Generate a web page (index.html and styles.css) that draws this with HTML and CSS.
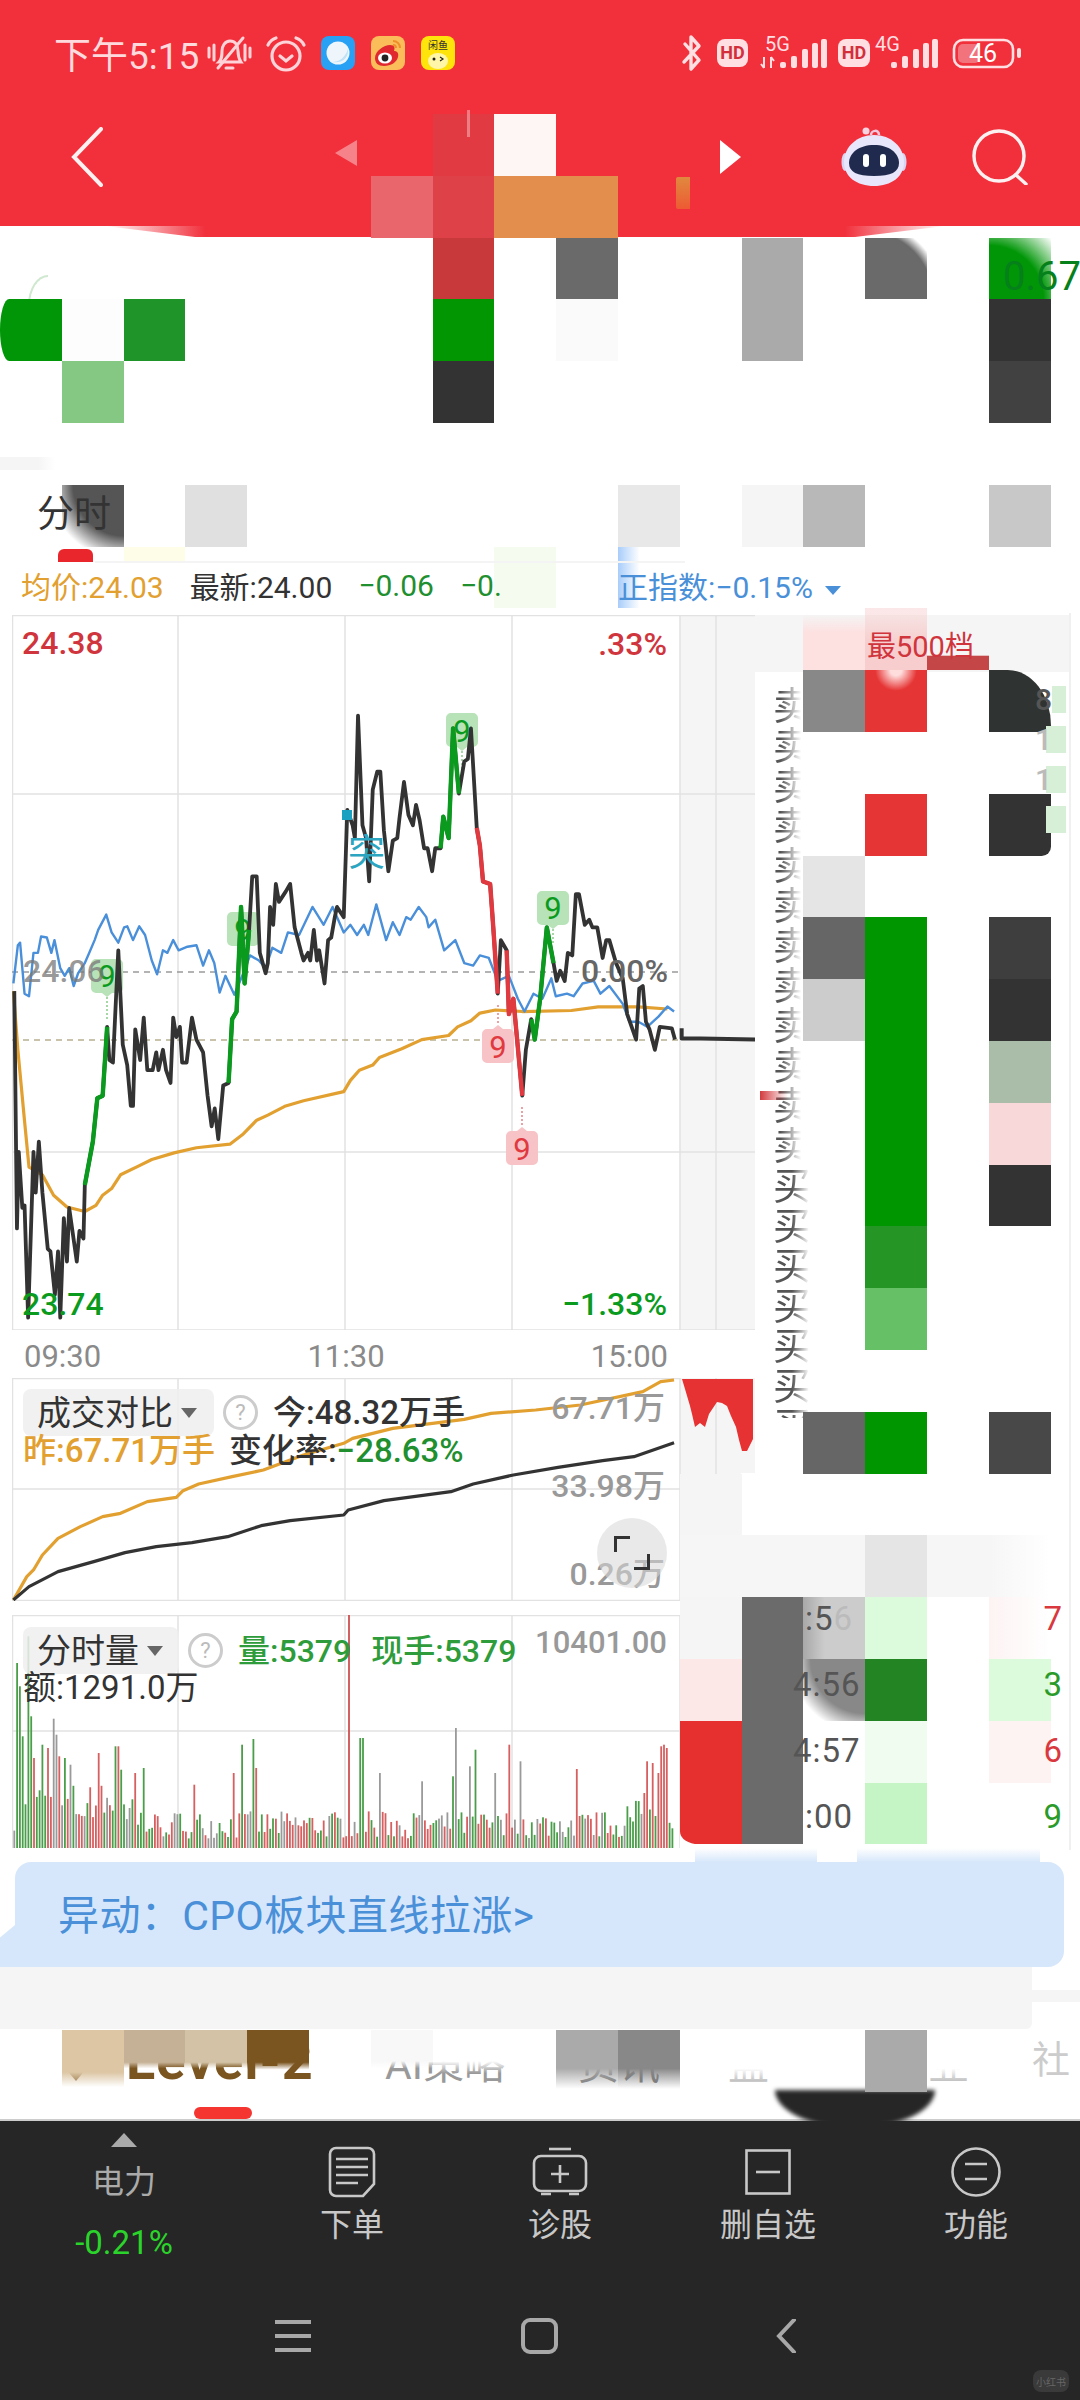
FILE: index.html
```html
<!DOCTYPE html>
<html lang="zh-CN">
<head>
  <meta charset="UTF-8" />
  <meta name="viewport" content="width=device-width, initial-scale=1.0"/>
  <title>分时</title>
  <link rel="stylesheet" href="styles.css">
</head>
<body>
<div class="page">

  <header class="top">
    <div class="status">
      <span class="clock">下午5:15</span>
      <svg class="st-bell" viewBox="0 0 45 36">
        <path d="M2 13v9M7 10v15M38 10v15M43 13v9"/>
        <path d="M12 27c3-3 3-6 3-11 0-5 3-10 8-10s8 4 8 10c0 5 1 8 3 11z"/>
        <path d="M11 33L36 3"/>
        <path d="M19 33h7"/>
      </svg>
      <svg class="st-alarm" viewBox="0 0 42 38">
        <circle cx="21" cy="22" r="14"/>
        <path d="M15 22l6 5 6-5M3 11c2-4 5-6 8-7M39 11c-2-4-5-6-8-7"/>
      </svg>
      <svg class="st-app" viewBox="0 0 34 34">
        <rect width="34" height="34" rx="8" fill="#28a0f4"/>
        <circle cx="17" cy="17" r="11.5" fill="#eef6fb"/>
        <path d="M11 26c7 0 13-4 16-13 1 8-5 15-16 13z" fill="#bfe2f6"/>
      </svg>
      <svg class="st-app" viewBox="0 0 34 34">
        <rect width="34" height="34" rx="8" fill="#fbbd5a"/>
        <path d="M4 22c0-7 9-13 15-13 5 0 5 3 4 6 3 0 5 2 4 6-1 5-7 9-14 9-6 0-9-3-9-8z" fill="#e0282e"/>
        <ellipse cx="14" cy="22" rx="7" ry="5.5" fill="#fff"/>
        <circle cx="14" cy="22" r="3.4" fill="#222"/>
        <path d="M22 5c4 0 7 3 7 7M22 9c2 0 3 1 3 3" fill="none" stroke="#ef8f2a" stroke-width="2"/>
      </svg>
      <svg class="st-app" viewBox="0 0 34 34">
        <rect width="34" height="34" rx="8" fill="#ffe40c"/>
        <text x="17" y="13" class="st-xy">闲鱼</text>
        <ellipse cx="17" cy="25" rx="10" ry="8" fill="#fff6a8"/>
        <circle cx="13" cy="23" r="1.5" fill="#222"/>
        <path d="M19 21l3 2-3 2" fill="none" stroke="#222" stroke-width="1.2"/>
      </svg>
      <svg class="st-right" viewBox="0 0 350 50">
        <path class="st-line" d="M5 15l14 16-8 9V8l8 9L4 33"/>
        <rect x="37" y="10" width="31" height="28" rx="8" class="st-fill"/>
        <text x="52.5" y="30" class="st-hd">HD</text>
        <text x="85" y="22" class="st-net">5G</text>
        <path class="st-thin" d="M84 28v11M84 39l-3-4M91 39V28M91 28l3 4"/>
        <rect x="100" y="33" width="6" height="6" rx="2" class="st-fill"/>
        <rect x="111" y="27" width="6" height="12" rx="2" class="st-fill"/>
        <rect x="122" y="20" width="6" height="19" rx="2" class="st-fill"/>
        <rect x="132" y="14" width="6" height="25" rx="2" class="st-fill"/>
        <rect x="141" y="10" width="6" height="29" rx="2" class="st-fill"/>
        <rect x="158" y="10" width="32" height="28" rx="8" class="st-fill"/>
        <text x="174" y="30" class="st-hd">HD</text>
        <text x="195" y="22" class="st-net">4G</text>
        <rect x="211" y="33" width="6" height="6" rx="2" class="st-fill"/>
        <rect x="222" y="27" width="6" height="12" rx="2" class="st-fill"/>
        <rect x="233" y="20" width="6" height="19" rx="2" class="st-fill"/>
        <rect x="243" y="14" width="6" height="25" rx="2" class="st-fill"/>
        <rect x="252" y="10" width="6" height="29" rx="2" class="st-fill"/>
        <rect x="274" y="11" width="59" height="27" rx="9" class="st-batt"/>
        <rect x="278" y="15" width="22" height="19" rx="5" fill="#f2737b"/>
        <text x="303" y="33" class="st-pct">46</text>
        <rect x="337" y="19" width="4" height="10" rx="2" class="st-fill"/>
      </svg>
    </div>
    <nav class="nav">
      <svg class="nav-back" viewBox="0 0 32 60"><path d="M30 2L3 30l27 28"/></svg>
      <span class="nav-prev"></span>
      <span class="nav-tick"></span>
      <span class="nav-tag"></span>
      <span class="nav-next"></span>
      <svg class="nav-robot" viewBox="0 0 66 60">
        <path d="M30 8c0-5 8-6 8 0" fill="none" stroke="#f2c6dc" stroke-width="2.5"/>
        <circle cx="25" cy="4" r="3.5" fill="#f7d3e2"/>
        <ellipse cx="4" cy="35" rx="3.5" ry="9" fill="#d6d6f4"/>
        <ellipse cx="62" cy="35" rx="3.5" ry="9" fill="#d6d6f4"/>
        <path d="M33 8c17 0 30 12 30 27 0 15-13 24-30 24S3 50 3 35C3 20 16 8 33 8z" fill="#e8e6fa"/>
        <path d="M33 18c15 0 25 8 25 18 0 9-8 13-25 13S8 45 8 36c0-10 10-18 25-18z" fill="#1f2a4e"/>
        <rect x="22" y="27" width="6" height="13" rx="3" fill="#fff"/>
        <rect x="39" y="27" width="6" height="13" rx="3" fill="#fff"/>
      </svg>
      <svg class="nav-search" viewBox="0 0 56 56"><circle cx="27" cy="27" r="25"/><path d="M44 46l10 9"/></svg>
    </nav>
    <span class="top-bulge"></span>
  </header>

  <section class="quote">
    <span class="quote-num">0.67</span>
    <span class="quote-arc"></span>
    <span class="quote-strip"></span>
  </section>

  <div class="tabrow">
    <span class="tabrow-cur">分时</span>
    <span class="tabrow-mark"></span>
  </div>

  <div class="info">
    <span class="c-avg">均价:24.03</span>
    <span class="c-now">最新:24.00</span>
    <span class="c-down">−0.06</span>
    <span class="c-down">−0.</span>
    <span class="c-index">正指数:−0.15%</span>
    <span class="c-caret"></span>
  </div>

  <main class="main">
    <div class="charts">
      <div class="chart chart-price">
        <svg class="plot" width="743" height="715" viewBox="0 0 743 715">
          <rect x="668" width="75" height="715" fill="#f5f5f5"/>
          <path class="grid" d="M.5 0v715M166 0v715M333 0v715M500 0v715M668 0v715M704 0v715M0 179h743M0 537h743M0 .5h743M0 715h743"/>
          <path class="dash" d="M0 357h668"/>
          <path class="dash dash-avg" d="M0 425h668"/>
          <g class="tags" transform="translate(-12,0)">
            <path class="tag-up" d="M91 964a5 5 0 0 1 5-5h22a5 5 0 0 1 5 5v24a5 5 0 0 1-5 5h-6l-5 4-5-4h-6a5 5 0 0 1-5-5z" transform="translate(0,-615)"/>
            <path class="tag-up" d="M227 917a5 5 0 0 1 5-5h22a5 5 0 0 1 5 5v24a5 5 0 0 1-5 5h-22a5 5 0 0 1-5-5z" transform="translate(0,-615)"/>
            <path class="tag-up" d="M446 718a5 5 0 0 1 5-5h22a5 5 0 0 1 5 5v24a5 5 0 0 1-5 5h-6l-5 4-5-4h-6a5 5 0 0 1-5-5z" transform="translate(0,-615)"/>
            <path class="tag-up" d="M537 896a5 5 0 0 1 5-5h22a5 5 0 0 1 5 5v24a5 5 0 0 1-5 5h-6l-5 4-5-4h-6a5 5 0 0 1-5-5z" transform="translate(0,-615)"/>
            <path class="tag-dn" d="M482 1034a5 5 0 0 1 5-5h6l5-4 5 4h6a5 5 0 0 1 5 5v24a5 5 0 0 1-5 5h-22a5 5 0 0 1-5-5z" transform="translate(0,-615)"/>
            <path class="tag-dn" d="M506 1136a5 5 0 0 1 5-5h6l5-4 5 4h6a5 5 0 0 1 5 5v24a5 5 0 0 1-5 5h-22a5 5 0 0 1-5-5z" transform="translate(0,-615)"/>
            <text x="107" y="372" class="nine up">9</text>
            <text x="243" y="326" class="nine up">9</text>
            <text x="462" y="127" class="nine up">9</text>
            <text x="553" y="304" class="nine up">9</text>
            <text x="498" y="443" class="nine dn">9</text>
            <text x="522" y="545" class="nine dn">9</text>
            <path class="drop drop-up" d="M107 382v24M462 136v25M553 314v16"/>
            <path class="drop drop-dn" d="M498 390v20M522 492v20"/>
          </g>
          <g transform="translate(-12,-55) scale(.4464,.5102)">
            <polyline class="ln ln-avg" points="30,845 40,960 55,1100 65,1190 95,1205 120,1245 150,1268 190,1277 215,1265 230,1245 250,1232 270,1205 310,1188 340,1175 390,1162 440,1152 515,1145 545,1125 575,1098 600,1088 640,1070 680,1060 770,1042 785,1020 805,1000 835,990 850,975 900,958 945,940 1005,932 1025,915 1055,903 1075,888 1110,882 1170,885 1280,883 1340,876 1430,876 1495,880"/>
            <polyline class="ln ln-idx" points="30,830 40,755 45,750 55,850 65,855 75,770 85,770 92,738 105,740 115,770 122,745 135,800 145,815 155,800 165,835 175,810 190,790 200,770 212,745 220,725 238,695 250,730 265,750 278,720 285,718 298,745 312,718 325,735 340,785 352,812 365,765 375,770 388,745 400,765 420,758 440,755 455,795 468,765 480,790 492,848 505,815 525,852 545,810 560,775 580,785 595,800 610,760 630,770 645,730 670,735 700,680 725,715 745,680 770,730 785,715 800,735 815,715 825,735 843,675 865,745 880,710 895,735 910,700 920,705 938,680 955,700 960,720 975,705 995,765 1020,745 1040,790 1060,795 1075,775 1095,780 1115,825 1140,815 1160,860 1175,885 1195,850 1215,860 1235,820 1245,855 1270,850 1285,855 1305,830 1330,825 1345,850 1365,835 1395,870 1410,905 1430,905 1450,915 1475,895 1495,875 1510,885"/>
            <polyline class="ln ln-price" points="32,845 38,1310 42,1160 50,1270 55,1265 63,1485 75,1160 80,1240 87,1140 95,1240 107,1350 113,1355 123,1440 130,1355 135,1485 143,1290 150,1375 155,1270 172,1375 178,1315 187,1330 190,1225 208,1140 218,1055 230,1050 240,915 245,980 253,985 265,765 275,950 285,990 293,1070 298,1070 303,920 314,980 322,897 330,1000 342,1000 350,965 355,1000 365,960 372,1000 382,1025 388,897 395,935 403,915 408,985 418,985 430,897 440,940 455,965 465,1050 474,1110 481,1075 489,1135 500,1030 512,1025 520,900 530,885 540,680 548,830 558,725 565,620 575,620 582,770 595,810 600,790 605,680 612,715 618,635 625,670 640,650 650,635 660,720 675,770 680,785 690,770 695,785 703,725 710,785 715,765 727,830 735,745 742,740 750,700 755,680 770,700 778,490 790,520 795,545 802,305 812,520 820,545 827,630 835,450 845,415 852,415 860,530 870,610 880,550 890,545 895,505 905,435 915,500 925,520 932,480 940,510 950,565 958,565 968,610 975,565 987,565 993,503 1005,545 1015,330 1028,458 1040,395 1048,390 1055,330 1068,525 1075,560 1082,630 1098,635 1105,720 1115,850 1122,745 1135,765 1140,890 1150,860 1170,1050 1178,960 1190,900 1198,940 1210,860 1225,720 1240,790 1247,825 1255,805 1265,825 1272,770 1282,775 1290,655 1297,655 1310,715 1320,705 1327,720 1338,720 1350,780 1358,745 1365,745 1380,790 1395,820 1405,890 1425,940 1432,840 1440,835 1447,905 1455,920 1467,960 1478,915 1505,918 1512,940"/>
            <polyline class="ln ln-up" points="190,1225 208,1140 218,1055 230,1050 240,915"/>
            <polyline class="ln ln-up" points="512,1025 520,900 530,885 540,680 548,830 558,725"/>
            <polyline class="ln ln-up" points="987,565 993,503 1005,545 1015,330 1028,458"/>
            <polyline class="ln ln-up" points="1190,900 1198,940 1210,860 1225,720 1240,790"/>
            <polyline class="ln ln-dn" points="1068,525 1075,560 1082,630 1098,635 1105,720 1115,850"/>
            <polyline class="ln ln-dn" points="1135,765 1140,890 1150,860 1170,1050"/>
            <polyline class="ln ln-stub" points="1527,918 1527,938 1570,938 1720,940"/>
          </g>
          <rect x="330" y="195" width="10" height="10" fill="#1aa0c0"/>
        </svg>
        <span class="lb lb-hi">24.38</span>
        <span class="lb lb-hipct">.33%</span>
        <span class="lb lb-pre">24.06</span>
        <span class="lb lb-zero">0.00%</span>
        <span class="lb lb-lo">23.74</span>
        <span class="lb lb-lopct">−1.33%</span>
        <span class="lb lb-tu">突</span>
      </div>

      <div class="axis"><span>09:30</span><span>11:30</span><span>15:00</span></div>

      <div class="chart chart-vol">
        <svg class="plot" width="743" height="223" viewBox="0 0 743 223">
          <rect x="668" width="61" height="223" fill="#f5f5f5"/>
          <rect x="729" width="14" height="95" fill="#f5f5f5"/>
          <path class="grid" d="M.5 0v223M166 0v223M333 0v223M500 0v223M668 0v223M704 0v223M0 111h668M0 .5h668M0 222.5h668"/>
          <polygon fill="#e63232" points="670,1 741,1 741,61 735,73 730,73 727,62 724,49 719,38 715,28 710,25 705,24 701,30 697,36 693,49 688,45 683,49 680,36 678,28 673,11"/>
          <g transform="translate(-12,-18) scale(.4464,.3333)">
            <polyline class="ln ln-avg" points="30,720 60,650 75,630 95,585 130,535 180,500 230,470 270,460 330,425 395,412 410,392 445,372 520,350 590,330 680,285 770,250 790,235 880,205 1040,178 1100,160 1200,150 1300,135 1440,95 1480,65 1510,60"/>
            <polyline class="ln ln-today" points="30,720 65,680 130,635 210,605 280,578 350,560 430,548 510,530 585,497 650,482 770,465 780,450 860,422 1010,395 1060,372 1150,345 1250,322 1350,302 1420,290 1510,248"/>
          </g>
        </svg>
        <span class="lb lb-max">67.71万</span>
        <span class="lb lb-mid">33.98万</span>
        <span class="lb lb-min">0.26万</span>
        <div class="legend legend-a">
          <span class="pill">成交对比<i class="pill-caret"></i></span>
          <span class="help">?</span>
          <span class="c-now">今:48.32万手</span>
        </div>
        <div class="legend legend-b">
          <span class="c-avg">昨:67.71万手</span>
          <span class="c-now">变化率:<em class="c-down">−28.63%</em></span>
        </div>
        <span class="expand"><i class="expand-a"></i><i class="expand-b"></i></span>
      </div>

      <div class="chart chart-bars">
        <svg class="plot" id="bars" width="668" height="233" viewBox="0 0 668 233">
          <path class="grid" d="M.5 0v233M166 0v233M333 0v233M500 0v233M668 0v233M0 116h668M0 .5h668"/>
        </svg>
        <span class="lb lb-cap">10401.00</span>
        <div class="legend legend-c">
          <span class="pill pill-sm">分时量<i class="pill-caret"></i></span>
          <span class="help">?</span>
          <span class="c-vol">量:5379</span>
          <span class="c-vol">现手:5379</span>
        </div>
        <div class="legend legend-d"><span class="c-now">额:1291.0万</span></div>
      </div>
    </div>

    <aside class="panel">
      <div class="panel-head"><span class="panel-title">最500档</span></div>
      <div class="panel-body">
        <div class="glitch"><span class="glitch-sell">卖卖卖卖卖卖卖卖卖卖卖卖</span><span class="glitch-buy">买买买买买买买</span></div>
        <i class="mid-mark"></i>
        <div class="book">
          <div class="book-row"><b>8</b><i></i></div>
          <div class="book-row"><b class="dim">1</b><i></i></div>
          <div class="book-row"><b class="dim">1</b><i></i></div>
          <div class="book-row"><i></i></div>
        </div>
      </div>
      <div class="ticks">
        <div class="tick"><span class="tick-time">:5<u>6</u></span><span class="tick-red">7</span></div>
        <div class="tick"><span class="tick-time">4:56</span><span class="tick-green">3</span></div>
        <div class="tick"><span class="tick-time">4:57</span><span class="tick-red">6</span></div>
        <div class="tick"><span class="tick-time">:00</span><span class="tick-green">9</span></div>
      </div>
    </aside>
  </main>

  <section class="banner">
    <i class="banner-smear banner-smear-a"></i>
    <i class="banner-smear banner-smear-b"></i>
    <span>异动：CPO板块直线拉涨&gt;</span>
  </section>
  <div class="strip"></div>

  <div class="tabs">
    <i class="tabs-drop"></i>
    <span class="tab tab-level">Level-2</span>
    <span class="tab tab-ai">AI策略</span>
    <span class="tab tab-news">资讯</span>
    <span class="tab tab-pan">盘</span>
    <span class="tab tab-ye">业</span>
    <span class="tab tab-she">社</span>
    <i class="tabs-mark"></i>
    <i class="tabs-blob"></i>
  </div>

  <footer class="dock">
    <div class="dock-row">
      <div class="dock-item dock-sector">
        <i class="dock-up"></i>
        <span>电力</span>
        <span class="dock-pct">-0.21%</span>
      </div>
      <div class="dock-item">
        <svg class="ic" width="48" height="52" viewBox="0 0 48 52">
          <path d="M8 2h32a6 6 0 0 1 6 6v30L35 50H8a6 6 0 0 1-6-6V8a6 6 0 0 1 6-6z"/>
          <path d="M8 13h32M8 21h32M8 29h32M8 37h22"/>
        </svg>
        <span>下单</span>
      </div>
      <div class="dock-item">
        <svg class="ic" width="56" height="50" viewBox="0 0 56 50">
          <path d="M17 2h22"/>
          <rect x="2" y="9" width="52" height="35" rx="7"/>
          <path d="M28 18v18M19 27h18M9 47h10M37 47h10"/>
        </svg>
        <span>诊股</span>
      </div>
      <div class="dock-item">
        <svg class="ic" width="46" height="46" viewBox="0 0 46 46">
          <rect x="1.5" y="1.5" width="43" height="43"/>
          <path d="M11 23h24"/>
        </svg>
        <span>删自选</span>
      </div>
      <div class="dock-item">
        <svg class="ic" width="50" height="50" viewBox="0 0 50 50">
          <ellipse cx="25" cy="25" rx="23.5" ry="23.5"/>
          <path d="M14 17h22M14 32h22"/>
        </svg>
        <span>功能</span>
      </div>
    </div>
    <div class="sysbar">
      <svg class="sys" width="36" height="34" viewBox="0 0 36 34"><path d="M0 3h36M0 17h36M0 31h36"/></svg>
      <svg class="sys" width="37" height="36" viewBox="0 0 37 36"><rect x="2" y="2" width="33" height="32" rx="7"/></svg>
      <svg class="sys sys-back" width="20" height="34" viewBox="0 0 20 34"><path d="M18 1L3 17l15 16"/></svg>
    </div>
    <span class="mark">小红书</span>
  </footer>

  <div class="mosaic" id="mosaic"></div>
</div>
<script src="app.js"></script>
</body>
</html>
```

FILE: styles.css
```css
* {
  box-sizing: border-box;
}

html, body {
  margin: 0;
  padding: 0;
}

body {
  background: #fff;
  color: #333;
  font-family: Roboto, "Noto Sans CJK SC", sans-serif;
}

.page {
  position: relative;
  width: 1080px;
  height: 2400px;
  overflow: hidden;
  display: flex;
  flex-direction: column;
  background: #fff;
}

/* red header */
.top {
  position: relative;
  height: 226px;
  background: #f1303c;
  flex: none;
}

.status {
  height: 106px;
  padding-left: 54px;
  display: flex;
  align-items: center;
}

.clock {
  font-size: 37px;
  color: #ffdadd;
  width: 153px;
  white-space: nowrap;
}

.st-bell {
  width: 45px;
  height: 36px;
  fill: none;
  stroke: #ffd3d7;
  stroke-width: 3;
  stroke-linecap: round;
}

.st-alarm {
  width: 42px;
  height: 38px;
  margin-left: 13px;
  fill: none;
  stroke: #ffd3d7;
  stroke-width: 3.2;
  stroke-linecap: round;
}

.st-app {
  width: 34px;
  height: 34px;
  margin-left: 14px;
}

.st-app + .st-app {
  margin-left: 16px;
}

.st-xy {
  font-size: 10px;
  text-anchor: middle;
  fill: #333;
}

.st-right {
  width: 350px;
  height: 50px;
  margin-left: auto;
  margin-right: 50px;
  transform: translateY(1px);
}

.st-line {
  fill: none;
  stroke: #ffdfe2;
  stroke-width: 3.4;
  stroke-linejoin: round;
  stroke-linecap: round;
}

.st-thin {
  fill: none;
  stroke: #ffdfe2;
  stroke-width: 2;
}

.st-fill {
  fill: #ffdfe2;
}

.st-hd {
  font-size: 18px;
  font-weight: 700;
  text-anchor: middle;
  fill: #d22f3c;
}

.st-net {
  font-size: 20px;
  fill: #ffdfe2;
}

.st-batt {
  fill: none;
  stroke: #ffdfe2;
  stroke-width: 2.6;
}

.st-pct {
  font-size: 25px;
  text-anchor: middle;
  fill: #fff;
}

.nav {
  position: relative;
  height: 102px;
  display: flex;
  align-items: center;
}

.nav-back {
  width: 32px;
  height: 60px;
  margin-left: 71px;
  fill: none;
  stroke: #fdf0f0;
  stroke-width: 4;
  stroke-linecap: round;
}

.nav-prev {
  width: 0;
  height: 0;
  margin-left: 232px;
  margin-top: -8px;
  border-style: solid;
  border-width: 13px 22px 13px 0;
  border-color: transparent rgba(255, 255, 255, .4) transparent transparent;
}

.nav-tick {
  position: absolute;
  z-index: 2;
  left: 467px;
  top: 4px;
  width: 3px;
  height: 27px;
  background: rgba(255, 255, 255, .35);
}

.nav-tag {
  position: absolute;
  left: 676px;
  top: 71px;
  width: 14px;
  height: 32px;
  border-radius: 2px 0 0 2px;
  background: linear-gradient(#e0893e, #ee5a34);
}

.nav-next {
  width: 0;
  height: 0;
  margin-left: 363px;
  border-style: solid;
  border-width: 17px 0 17px 21px;
  border-color: transparent transparent transparent #fff;
}

.nav-robot {
  width: 66px;
  height: 60px;
  margin-left: 100px;
}

.nav-search {
  width: 56px;
  height: 56px;
  margin-left: 65px;
  fill: none;
  stroke: #fdf0f0;
  stroke-width: 3.4;
  stroke-linecap: round;
}

.top-bulge {
  position: absolute;
  left: 105px;
  right: 135px;
  top: 226px;
  height: 11px;
  background: linear-gradient(90deg, rgba(241, 48, 60, 0), #f1303c 100px, #f1303c calc(100% - 100px), rgba(241, 48, 60, 0));
  clip-path: polygon(0 0, 100% 0, calc(100% - 90px) 100%, 90px 100%);
}

/* masked quote block */
.quote {
  position: relative;
  height: 259px;
  flex: none;
}

.quote-num {
  position: absolute;
  z-index: 2;
  left: 1003px;
  top: 28px;
  font-size: 40px;
  line-height: 46px;
  color: #05801a;
}

.quote-arc {
  position: absolute;
  left: 28px;
  top: 49px;
  width: 20px;
  height: 30px;
  border-left: 2px solid #cfe8cf;
  border-top: 2px solid #cfe8cf;
  border-radius: 100% 0 0 0;
}

.quote-strip {
  position: absolute;
  left: 0;
  top: 231px;
  width: 55px;
  height: 13px;
  background: linear-gradient(90deg, #f5f5f5 70%, #fff);
}

.tabrow {
  position: relative;
  height: 62px;
  flex: none;
}

.tabrow-cur {
  position: absolute;
  z-index: 2;
  left: 37px;
  top: 7px;
  width: 74px;
  overflow: hidden;
  white-space: nowrap;
  font-size: 37px;
  line-height: 46px;
  color: #333;
}

.tabrow-mark {
  position: absolute;
  left: 58px;
  top: 64px;
  width: 35px;
  height: 13px;
  z-index: 2;
  background: #e8262c;
  border-radius: 6px 6px 0 0;
}

/* stats line */
.info {
  position: relative;
  z-index: 2;
  height: 66px;
  padding: 10px 0 0 21px;
  flex: none;
  display: flex;
  align-items: center;
  gap: 26px;
  font-size: 30px;
}

.info::before {
  content: "";
  position: absolute;
  left: 95px;
  right: 395px;
  top: 14px;
  height: 2px;
  background: #f4f4f4;
}

.c-avg {
  color: #e2a030;
}

.c-now {
  color: #333;
}

.c-down {
  color: #1f8f2f;
  font-style: normal;
}

.c-index {
  position: absolute;
  left: 618px;
  color: #4a90d9;
}

.c-caret {
  position: absolute;
  left: 825px;
  top: 39px;
  width: 0;
  height: 0;
  border-style: solid;
  border-width: 9px 8px 0;
  border-color: #4a90d9 transparent transparent;
}

.c-vol {
  color: #2e9c3a;
}

/* chart column + order panel */
.main {
  height: 1237px;
  flex: none;
  display: flex;
}

.charts {
  width: 755px;
  flex: none;
  padding: 2px 0 0 12px;
  display: flex;
  flex-direction: column;
}

.chart {
  position: relative;
  width: 743px;
  flex: none;
}

.chart-price {
  height: 715px;
}

.chart-vol {
  height: 223px;
}

.chart-bars {
  height: 233px;
  margin-top: 14px;
}

.plot {
  display: block;
}

.grid {
  fill: none;
  stroke: #e2e2e2;
  stroke-width: 1.5;
}

.dash {
  fill: none;
  stroke: #9a9a9a;
  stroke-width: 1.5;
  stroke-dasharray: 6 5;
}

.dash-avg {
  stroke: #b8b090;
}

.ln {
  fill: none;
  stroke-linejoin: round;
  vector-effect: non-scaling-stroke;
}

.ln-price {
  stroke: #333;
  stroke-width: 3.8;
}

.ln-stub {
  stroke: #333;
  stroke-width: 4;
}

.ln-today {
  stroke: #333;
  stroke-width: 3.2;
}

.ln-up {
  stroke: #0a9a1e;
  stroke-width: 4.4;
}

.ln-dn {
  stroke: #e0393f;
  stroke-width: 4.4;
}

.ln-idx {
  stroke: #4a8fd9;
  stroke-width: 2.4;
}

.ln-avg {
  stroke: #e2a030;
  stroke-width: 3.2;
}

.tag-up {
  fill: #b8e2b8;
}

.tag-dn {
  fill: #f7c3c6;
}

.nine {
  font-size: 31px;
  text-anchor: middle;
}

.nine.up {
  fill: #0a9a1e;
}

.nine.dn {
  fill: #e0393f;
}

.drop {
  fill: none;
  stroke-width: 1.2;
  stroke-dasharray: 2 2;
}

.drop-up {
  stroke: #6cbf6c;
}

.drop-dn {
  stroke: #d9666a;
}

.lb {
  position: absolute;
  font-size: 32px;
  font-weight: 500;
  line-height: 36px;
  white-space: nowrap;
}

.lb-hi {
  left: 10px;
  top: 10px;
  color: #d0343c;
}

.lb-hipct {
  right: 88px;
  top: 11px;
  color: #d0343c;
}

.lb-pre {
  left: 11px;
  top: 338px;
  color: rgba(120, 120, 120, .75);
}

.lb-zero {
  right: 87px;
  top: 338px;
  color: #666;
}

.lb-lo {
  left: 10px;
  top: 671px;
  color: #0a9a1e;
}

.lb-lopct {
  right: 88px;
  top: 671px;
  color: #0a9a1e;
}

.lb-tu {
  left: 336px;
  top: 220px;
  font-size: 37px;
  font-weight: 400;
  line-height: 37px;
  color: #2ba5c0;
}

.lb-max, .lb-mid, .lb-min, .lb-cap {
  color: #999;
  font-size: 32px;
}

.lb-max {
  right: 90px;
  top: 12px;
}

.lb-mid {
  right: 90px;
  top: 90px;
}

.lb-min {
  right: 90px;
  top: 178px;
}

.lb-cap {
  right: 88px;
  top: 10px;
  font-size: 31px;
}

.axis {
  height: 48px;
  width: 668px;
  padding: 5px 12px 0;
  flex: none;
  display: flex;
  justify-content: space-between;
  align-items: center;
  font-size: 31px;
  color: #8a8a8a;
}

/* legends over the small charts */
.legend {
  position: absolute;
  left: 11px;
  display: flex;
  align-items: center;
  font-size: 33px;
  font-weight: 500;
  line-height: 40px;
  white-space: nowrap;
}

.legend-a {
  top: 11px;
}

.legend-b {
  top: 53px;
  gap: 14px;
}

.legend-c {
  top: 12px;
  font-size: 32px;
}

.legend-d {
  top: 53px;
  font-weight: 400;
}

.pill {
  width: 191px;
  height: 47px;
  padding-left: 14px;
  display: flex;
  align-items: center;
  gap: 8px;
  font-size: 34px;
  font-weight: 400;
  color: #333;
  background: rgba(238, 238, 238, .85);
  border-radius: 8px;
}

.pill-sm {
  width: 156px;
}

.pill-caret {
  width: 0;
  height: 0;
  border-style: solid;
  border-width: 10px 8px 0;
  border-color: #666 transparent transparent;
}

.help {
  width: 35px;
  height: 35px;
  margin: 0 15px 0 9px;
  display: flex;
  align-items: center;
  justify-content: center;
  font-size: 22px;
  font-weight: 400;
  color: #bbb;
  border: 3px solid #ccc;
  border-radius: 50%;
}

.legend-c .c-vol + .c-vol {
  margin-left: 20px;
}

.expand {
  position: absolute;
  left: 585px;
  top: 140px;
  width: 70px;
  height: 70px;
  background: rgba(215, 215, 215, .55);
  border-radius: 50%;
}

.expand-a, .expand-b {
  position: absolute;
  width: 16px;
  height: 16px;
  border: 0 solid #333;
}

.expand-a {
  left: 17px;
  top: 18px;
  border-width: 3px 0 0 3px;
}

.expand-b {
  right: 17px;
  bottom: 18px;
  border-width: 0 3px 3px 0;
}

.panel {
  position: relative;
  width: 316px;
  flex: none;
  display: flex;
  flex-direction: column;
  border-right: 2px solid #f0f0f0;
}

.panel-head {
  height: 57px;
  margin-top: 2px;
  padding-left: 112px;
  flex: none;
  display: flex;
  align-items: center;
  background: #f5f5f5;
}

.panel-title {
  position: relative;
  z-index: 2;
  font-size: 29px;
  color: #d0343c;
}

.panel-body {
  position: relative;
  flex: 1;
}

.glitch {
  position: absolute;
  left: 18px;
  top: 14px;
  height: 732px;
  overflow: hidden;
  display: flex;
  flex-direction: column;
  font-size: 38px;
  line-height: 40px;
  color: #555;
}

.glitch-sell, .glitch-buy {
  display: block;
  flex: none;
  width: 1em;
}

.glitch-sell {
  -webkit-mask-image: linear-gradient(90deg, #000 20%, rgba(0, 0, 0, .25) 60%, transparent 75%);
  mask-image: linear-gradient(90deg, #000 20%, rgba(0, 0, 0, .25) 60%, transparent 75%);
}

.glitch-buy {
  -webkit-mask-image: linear-gradient(90deg, #000 50%, transparent 95%);
  mask-image: linear-gradient(90deg, #000 50%, transparent 95%);
}

.mid-mark {
  position: absolute;
  left: 5px;
  top: 419px;
  width: 28px;
  height: 9px;
  background: linear-gradient(90deg, #d23b3f, rgba(210, 59, 63, 0));
}

.book {
  position: absolute;
  z-index: 2;
  right: 3px;
  top: 14px;
  display: flex;
  flex-direction: column;
  gap: 13px;
}

.book-row {
  height: 27px;
  display: flex;
  justify-content: flex-end;
  align-items: center;
  position: relative;
}

.book-row i {
  width: 20px;
  height: 27px;
  background: #d6efd6;
}

.book-row:first-child i {
  width: 14px;
}

.book-row b {
  position: absolute;
  right: 14px;
  font-size: 30px;
  font-weight: 500;
  color: #555;
}

.book-row b.dim {
  color: #bbb;
}

.ticks {
  position: relative;
  z-index: 2;
  margin-bottom: 1px;
  padding: 0 7px 0 38px;
  display: flex;
  flex-direction: column;
}

.tick {
  height: 66px;
  display: flex;
  justify-content: space-between;
  align-items: center;
  font-size: 33px;
}

.tick-time {
  width: 60px;
  text-align: right;
  color: #555;
  letter-spacing: 1px;
}

.tick-time u {
  text-decoration: none;
  color: #bbb;
}

.tick-red {
  color: #d8383e;
}

.tick-green {
  color: #2a9a2a;
}

/* info banner */
.banner {
  position: relative;
  height: 105px;
  margin: 12px 16px 0 15px;
  padding: 0 0 6px 43px;
  flex: none;
  display: flex;
  align-items: center;
  font-size: 41px;
  letter-spacing: .4px;
  color: #4a90d9;
  background: #d7e7fb;
  border-radius: 16px;
}

.banner::before {
  content: "";
  position: absolute;
  left: -15px;
  bottom: 0;
  width: 30px;
  height: 42px;
  background: #d7e7fb;
  clip-path: polygon(50% 0, 100% 0, 100% 100%, 0 100%, 0 30%);
}

.banner-smear {
  position: absolute;
  top: -14px;
  height: 14px;
  background: linear-gradient(rgba(215, 231, 251, 0), #d7e7fb);
}

.banner-smear-a {
  left: 680px;
  width: 122px;
}

.banner-smear-b {
  left: 842px;
  width: 183px;
}

.strip {
  position: relative;
  height: 62px;
  width: 1032px;
  flex: none;
  background: #f5f5f5;
  border-radius: 0 0 6px 0;
}

.strip::after {
  content: "";
  position: absolute;
  left: 1032px;
  top: 23px;
  width: 48px;
  height: 12px;
  background: #f5f5f5;
}

/* function tabs */
.tabs {
  position: relative;
  height: 92px;
  flex: none;
  border-bottom: 2px solid #ccc;
}

.tab {
  position: absolute;
  top: 11px;
  font-size: 41px;
  line-height: 50px;
  white-space: nowrap;
}

.tab-level {
  left: 126px;
  top: 7px;
  font-size: 54px;
  font-weight: 700;
  letter-spacing: 1px;
  color: #7a5520;
}

.tab-ai {
  left: 385px;
  color: #999;
}

.tab-news {
  left: 578px;
  color: #777;
}

.tab-pan {
  left: 728px;
  color: #aaa;
}

.tab-ye {
  left: 928px;
  color: #aaa;
}

.tab-she {
  left: 1032px;
  top: 6px;
  font-size: 38px;
  color: #ccc;
}

.tabs-drop {
  position: absolute;
  left: 65px;
  top: 39px;
  width: 0;
  height: 0;
  border-style: solid;
  border-width: 13px 11px 0;
  border-color: #8a6a3a transparent transparent;
}

.tabs-mark {
  position: absolute;
  left: 194px;
  top: 78px;
  width: 58px;
  height: 12px;
  background: #f43530;
  border-radius: 6px;
}

.tabs-blob {
  position: absolute;
  z-index: 1;
  left: 775px;
  top: 61px;
  width: 160px;
  height: 38px;
  overflow: hidden;
  background: #262626;
  border-radius: 0 0 50% 50% / 0 0 100% 100%;
  filter: blur(2px);
}

/* bottom dock */
.dock {
  position: relative;
  z-index: 2;
  flex: 1;
  background: #262626;
  display: flex;
  flex-direction: column;
}

.dock-row {
  height: 170px;
  display: grid;
  grid-template-columns: 248px repeat(4, 208px);
}

.dock-item {
  padding-top: 24px;
  display: flex;
  flex-direction: column;
  align-items: center;
  font-size: 32px;
  line-height: 42px;
  color: #c8c8c8;
}

.dock-item .ic {
  height: 54px;
  margin-bottom: 5px;
}

.dock-sector {
  padding-top: 12px;
  color: #aaa;
}

.dock-up {
  width: 0;
  height: 0;
  margin-bottom: 14px;
  border-style: solid;
  border-width: 0 13px 14px;
  border-color: transparent transparent #aaa;
}

.dock-pct {
  margin-top: 19px;
  font-size: 33px;
  color: #2bd42b;
}

.ic {
  fill: none;
  stroke: #c8c8c8;
  stroke-width: 2.6;
}

.sysbar {
  position: relative;
  height: 62px;
  margin-top: 14px;
  padding-left: 275px;
  display: flex;
  align-items: center;
  gap: 210px;
}

.sys {
  fill: none;
  stroke: #a8a8a8;
  stroke-width: 4;
  stroke-linecap: round;
}

.sys-back {
  margin-left: 8px;
}

.mark {
  position: absolute;
  right: 11px;
  bottom: 8px;
  width: 36px;
  height: 22px;
  display: flex;
  align-items: center;
  justify-content: center;
  font-size: 10px;
  color: #666;
  background: #3a3a3a;
  border-radius: 8px;
}

/* picture mosaic that lies over the page */
.mosaic {
  position: absolute;
  z-index: 1;
  left: 0;
  top: 114px;
  display: grid;
  grid-template-columns: repeat(18, 61.8px);
  grid-auto-rows: 61.8px;
  pointer-events: none;
}

.round-l {
  border-radius: 15% 0 0 15% / 50% 0 0 50%;
}

.round-tr {
  border-top-right-radius: 70% 90%;
}

.round-br {
  border-bottom-right-radius: 15%;
}

.round-bl {
  border-bottom-left-radius: 30% 20%;
}

.short {
  height: 16px;
}
```

FILE: app.js
```js
// mosaic blocks: row, column, background, optional class
const cells = [
  [0, 7, "#e23a42"], [0, 8, "#fdf6f4"],
  [1, 6, "#e8666c"], [1, 7, "#de4147"], [1, 8, "#e38e4c"], [1, 9, "#e38e4c"],
  [2, 7, "#c8393b"], [2, 9, "#6a6a6a"], [2, 12, "#aaa"],
  [2, 14, "radial-gradient(circle at 0 100%, #6a6a6a 78%, rgba(106,106,106,0) 90%)"],
  [2, 16, "radial-gradient(ellipse at 0 100%, #009607 62%, rgba(0,150,7,0) 100%)"],
  [3, 0, "#009607", "round-l"], [3, 1, "#fdfdfd"], [3, 2, "#1f9429"], [3, 7, "#029603"],
  [3, 9, "#fafafa"], [3, 12, "#aaa"], [3, 16, "#333"],
  [4, 1, "#84c884"], [4, 7, "#333"], [4, 16, "#414141"],
  [6, 1, "radial-gradient(circle at 100% 0, #555 58%, rgba(85,85,85,0) 85%)"],
  [6, 3, "#e0e0e0"], [6, 10, "#e8e8e8"], [6, 12, "#f5f5f5"], [6, 13, "#b8b8b8"], [6, 16, "#c8c8c8"],
  [7, 2, "#fdfde8", "short"], [7, 8, "#f5fbee"],
  [7, 10, "linear-gradient(90deg, #a8cdfa, rgba(168,205,250,0) 35%)"],
  [8, 13, "linear-gradient(rgba(253,224,224,0) 10%, #fde0e0 40%)"],
  [8, 14, "linear-gradient(rgba(248,208,208,.5) 10%, #f7cdcd 60%)"],
  [8, 15, "linear-gradient(rgba(196,70,70,0) 76%, #c44646 78%)"],
  [9, 13, "#888"],
  [9, 14, "radial-gradient(circle at 50% 0, #fdd 8%, #e63535 30%)"],
  [9, 16, "#2f3432", "round-tr"],
  [11, 14, "#e63535"], [11, 16, "#333", "round-br"],
  [12, 13, "#e5e5e5"],
  [13, 13, "#666"], [13, 14, "#009600"], [13, 16, "#3e3e3e"],
  [14, 13, "#ccc"], [14, 14, "#009600"], [14, 16, "#333"],
  [15, 14, "#009600"], [15, 16, "#a9bda9"],
  [16, 14, "#009600"], [16, 16, "#f8d8d8"],
  [17, 14, "#009600"], [17, 16, "#333"],
  [18, 14, "#259525"], [19, 14, "#66c066"],
  [21, 13, "#666"], [21, 14, "#009600"], [21, 16, "#484848"],
  [22, 11, "#f5f5f5"],
  [23, 11, "#f6f6f6"], [23, 12, "#f6f6f6"], [23, 13, "#f6f6f6"], [23, 14, "#e5e5e5"],
  [23, 15, "#f6f6f6"], [23, 16, "linear-gradient(90deg, #f6f6f6, #fff)"],
  [24, 11, "#f5f5f5"], [24, 12, "#6b6b6b"], [24, 13, "linear-gradient(90deg, #a8a8a8, #ccc 35%)"],
  [24, 14, "#dcfadc"], [24, 16, "linear-gradient(90deg, #fdf3f3, #fff)"],
  [25, 11, "#fde8e8"], [25, 12, "#6b6b6b"],
  [25, 13, "radial-gradient(circle at 100% 0, #888 62%, rgba(136,136,136,0) 85%)"],
  [25, 14, "#238423"], [25, 16, "#dcfadc"],
  [26, 11, "#e63030"], [26, 12, "#6b6b6b"], [26, 14, "#f0fcf0"], [26, 16, "#fdf3f3"],
  [27, 11, "#e63030", "round-bl"], [27, 12, "#6b6b6b"], [27, 14, "#c5f5c5"],
  [31, 1, "linear-gradient(#dcc6a4 68%, rgba(220,198,164,0) 92%)"],
  [31, 2, "linear-gradient(#c5b196 52%, rgba(197,177,150,0) 62%)"],
  [31, 3, "linear-gradient(#d3c2a6 52%, rgba(211,194,166,0) 62%)"],
  [31, 4, "linear-gradient(#7a5520 52%, rgba(122,85,32,0) 64%)"],
  [31, 6, "linear-gradient(#f8f8f8 50%, rgba(248,248,248,0) 62%)"],
  [31, 7, "linear-gradient(#fff 50%, rgba(255,255,255,0) 70%)"],
  [31, 8, "linear-gradient(#fff 50%, rgba(255,255,255,0) 70%)"],
  [31, 9, "linear-gradient(#aaa 62%, rgba(170,170,170,0) 95%)"],
  [31, 10, "linear-gradient(#888 62%, rgba(136,136,136,0) 95%)"],
  [31, 11, "linear-gradient(#fff 62%, rgba(255,255,255,0) 90%)"],
  [31, 12, "linear-gradient(#fff 62%, rgba(255,255,255,0) 90%)"],
  [31, 14, "#aaa"],
  [31, 15, "linear-gradient(#fff 62%, rgba(255,255,255,0) 90%)"]
];

const mosaic = document.getElementById("mosaic");
cells.forEach(([r, c, bg, cls]) => {
  const el = document.createElement("i");
  el.style.gridRow = r + 1;
  el.style.gridColumn = c + 1;
  el.style.background = bg;
  if (cls) el.className = cls;
  mosaic.appendChild(el);
});

// volume bars, x and top read off the reference at zoom scale
const spikes = [[38, 910], [45, 980], [62, 830], [68, 1070], [118, 1077], [50, 1130], [75, 1195], [93, 1155], [105, 1165], [125, 1125], [130, 1190], [142, 1195], [155, 1215], [222, 1180], [260, 1160], [272, 1230], [322, 1225], [302, 1240], [432, 1275], [542, 1155], [567, 1138], [523, 1240], [573, 1225], [777, 762], [808, 1135], [802, 1240], [850, 1240], [942, 1265], [1017, 1105], [1013, 1250], [1053, 1220], [1065, 1170], [1105, 1240], [1140, 1155], [1165, 1205], [1288, 1228], [1448, 1205], [1460, 1210], [1470, 1240], [1478, 1160], [1485, 1155], [1492, 1165], [1510, 1100], [1405, 1340], [1440, 1300]];

const svg = document.getElementById("bars");
const colors = ["#d85f5f", "#4a9e4a", "#d85f5f", "#4a9e4a", "#9a9a9a"];
let seed = 7;
const rnd = () => {
  seed = (seed * 16807) % 2147483647;
  return seed / 2147483647;
};

for (let x = 30; x <= 1510; x += 6.3) {
  const spike = spikes.find((s) => Math.abs(s[0] - x) < 3.2);
  const env = x < 300 ? 58 : x > 1400 ? 42 : 32;
  const h = spike ? (1465 - spike[1]) / 3 : env * (0.3 + rnd() * 0.85);
  const bar = document.createElementNS("http://www.w3.org/2000/svg", "rect");
  bar.setAttribute("x", (x / 2.24 - 12).toFixed(1));
  bar.setAttribute("y", (233 - h).toFixed(1));
  bar.setAttribute("width", 1.8);
  bar.setAttribute("height", h.toFixed(1));
  bar.setAttribute("fill", spike && spike[0] === 777 ? "#d05050" : colors[Math.floor(rnd() * 5)]);
  svg.appendChild(bar);
}
```
